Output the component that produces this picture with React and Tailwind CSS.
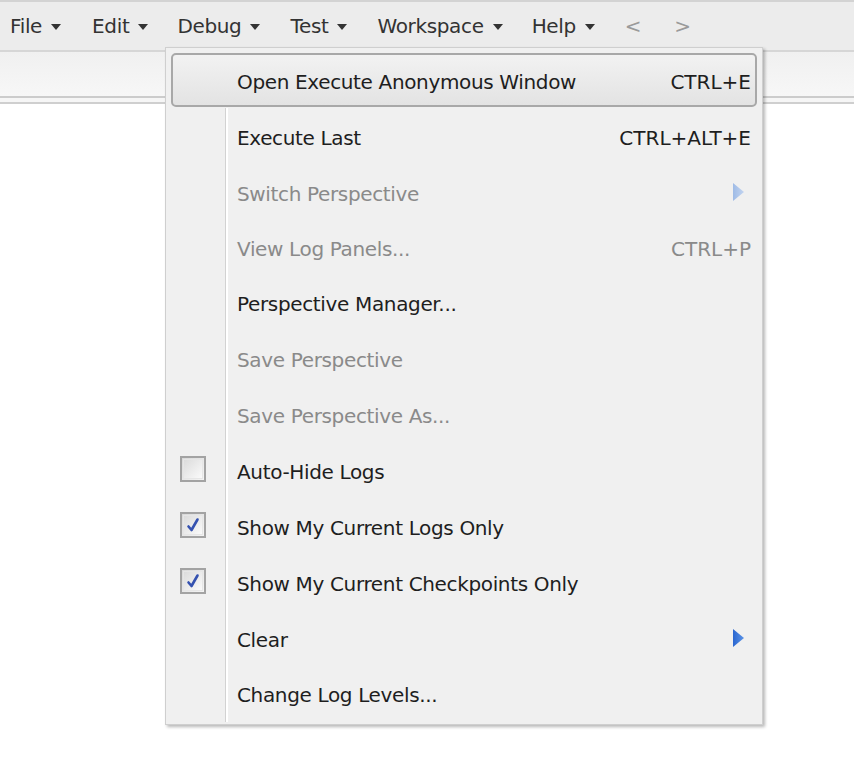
import React from "react";

const font = { fontFamily: '"DejaVu Sans", Verdana, sans-serif' };

function DownArrow() {
  return (
    <svg width="10" height="6" viewBox="0 0 10 6" className="ml-[9px] mt-[2px]">
      <polygon points="0,0 10,0 5,6" fill="#333" />
    </svg>
  );
}

function SubArrow({ disabled }) {
  return (
    <svg width="11" height="18" viewBox="0 0 11 18">
      <defs>
        <linearGradient id={disabled ? "ga" : "gb"} x1="0" y1="0" x2="1" y2="0">
          <stop offset="0" stopColor={disabled ? "#9fbbe6" : "#2a66d0"} />
          <stop offset="1" stopColor={disabled ? "#c2d4f0" : "#5b93e6"} />
        </linearGradient>
      </defs>
      <polygon points="0,0 11,9 0,18" fill={`url(#${disabled ? "ga" : "gb"})`} />
    </svg>
  );
}

function Check({ checked }) {
  return (
    <div className="w-[26px] h-[26px] border-2 border-[#a3a3a3] bg-gradient-to-br from-[#d9d9d9] to-[#f4f4f4] flex items-center justify-center mt-[-6px]">
      <div className="w-[20px] h-[20px] border border-[#e6e6e6] bg-gradient-to-br from-[#dcdcdc] to-[#fafafa] flex items-center justify-center">
        {checked && (
          <svg width="16" height="16" viewBox="0 0 16 16">
            <path d="M3.5 9.5 L6.5 13 L12.5 2.5" stroke="#3552b0" strokeWidth="2.6" fill="none" strokeLinecap="round" strokeLinejoin="round" />
          </svg>
        )}
      </div>
    </div>
  );
}

const items = [
  { label: "Open Execute Anonymous Window", shortcut: "CTRL+E", active: true },
  { label: "Execute Last", shortcut: "CTRL+ALT+E", pt: "pt-[3px]" },
  { label: "Switch Perspective", disabled: true, sub: true, pt: "pt-[3px]" },
  { label: "View Log Panels...", disabled: true, shortcut: "CTRL+P", pt: "pt-[1px]" },
  { label: "Perspective Manager...", pt: "pt-[0px]" },
  { label: "Save Perspective", disabled: true, pt: "pt-[0px]" },
  { label: "Save Perspective As...", disabled: true, pt: "pt-[0px]" },
  { label: "Auto-Hide Logs", check: "off", pt: "pt-[0px]" },
  { label: "Show My Current Logs Only", check: "on", pt: "pt-[0px]" },
  { label: "Show My Current Checkpoints Only", check: "on", pt: "pt-[0px]" },
  { label: "Clear", sub: true, pt: "pt-[0px]" },
  { label: "Change Log Levels...", last: true, pt: "pt-[0px]" },
];

function MenuRow({ item }) {
  const color = item.disabled ? "text-[#8a8a8a]" : "text-[#1e1e1e]";
  if (item.active) {
    return (
      <div className="h-[56px] px-[5px] py-[1px] flex">
        <div className="flex-1 flex rounded-[5px] border-2 border-[#a8a8a8] bg-gradient-to-b from-[#f2f2f2] to-[#e3e3e3]">
          <div className="w-[53px] shrink-0" />
          <div className="flex-1 flex items-center justify-between pl-[11px] pr-[4px] pt-[3px] text-[#1e1e1e]">
            <span className="tracking-[-0.35px]">{item.label}</span>
            <span>{item.shortcut}</span>
          </div>
        </div>
      </div>
    );
  }
  return (
    <div className={`${item.last ? "h-[54px]" : "h-[56px]"} flex relative`}>
      <div className="absolute left-[59px] top-0 bottom-0 w-[1px] bg-[#d2d2d2]" />
      <div className="absolute left-[60px] top-0 bottom-0 w-[2px] bg-white" />
      <div className="w-[60px] shrink-0 flex items-center pl-[14px]">
        {item.check && <Check checked={item.check === "on"} />}
      </div>
      <div className={`flex-1 flex items-center justify-between pl-[11px] pr-[11px] ${item.pt} ${color}`}>
        <span className="tracking-[-0.35px]">{item.label}</span>
        {item.shortcut && <span>{item.shortcut}</span>}
        {item.sub && (
          <span className="mr-[7px] mt-[-4px] flex">
            <SubArrow disabled={item.disabled} />
          </span>
        )}
      </div>
    </div>
  );
}

export default function App() {
  return (
    <div className="w-[854px] h-[764px] bg-white relative overflow-hidden text-[20px] leading-none" style={font}>
      <div className="h-[2px] bg-[#d3d3d3]" />
      <div className="h-[48px] bg-[#ececec] flex items-center text-[#333] pl-[10px] pb-[1px] tracking-[-0.35px]">
        {[
          ["File", 31],
          ["Edit", 29],
          ["Debug", 30],
          ["Test", 30],
          ["Workspace", 29],
          ["Help", 29],
        ].map(([l, mr]) => (
          <div key={l} className="flex items-center" style={{ marginRight: mr }}>
            <span>{l}</span>
            <DownArrow />
          </div>
        ))}
        <span className="text-[#9a9a9a] ml-[1px]">&lt;</span>
        <span className="text-[#9a9a9a] ml-[33px]">&gt;</span>
      </div>
      <div className="h-[2px] bg-[#d6d6d6]" />
      <div className="h-[44px] bg-gradient-to-b from-[#f0f0f0] to-[#f7f7f7]" />
      <div className="h-[2px] bg-[#cccccc]" />
      <div className="h-[4px] bg-[#f6f6f6]" />
      <div className="h-[2px] bg-[#cfcfcf]" />

      <div className="absolute left-[165px] top-[47px] w-[598px] bg-[#f0f0f0] border border-[#cfcfcf] pt-[4px] pb-[2px] shadow-[2px_2px_3px_rgba(0,0,0,0.28)]">
        {items.map((it) => (
          <MenuRow key={it.label} item={it} />
        ))}
      </div>
    </div>
  );
}
